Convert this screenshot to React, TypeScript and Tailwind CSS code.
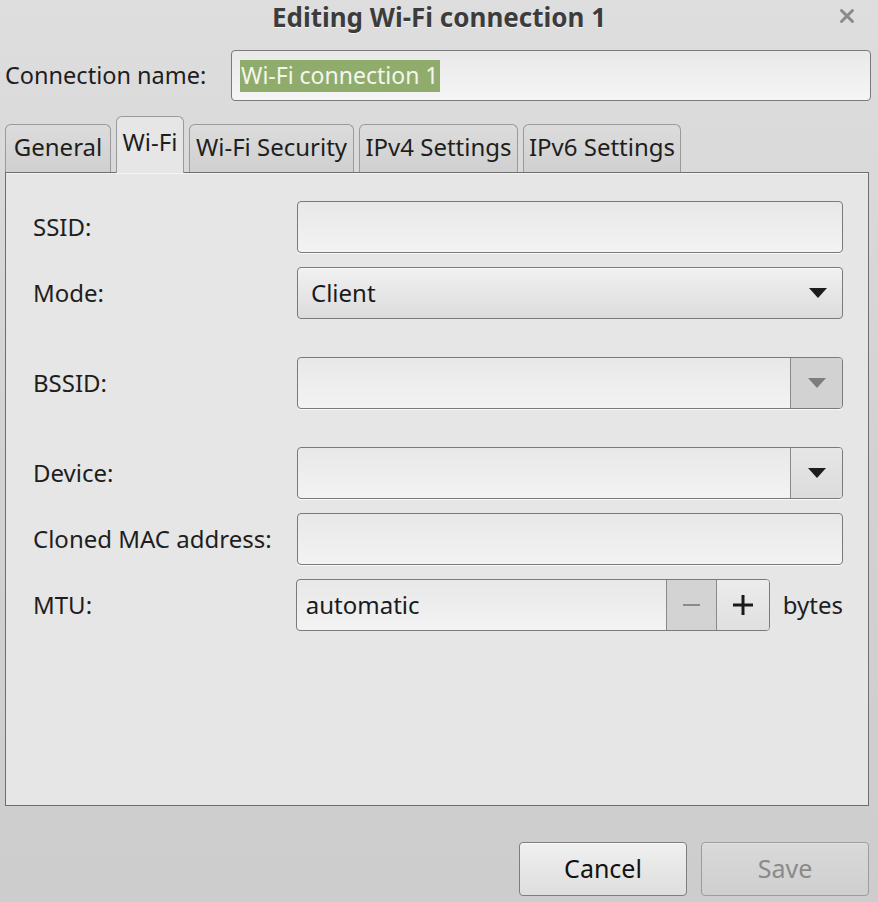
import { X } from "lucide-react"

const font = { fontFamily: '"Noto Sans", "Open Sans", sans-serif' }

function Arrow({ muted }: { muted?: boolean }) {
  return (
    <svg width="20" height="12" viewBox="0 0 20 12">
      <path d="M1 1 H19 L10 11 Z" fill={muted ? "#7d7d7d" : "#1c1c1c"} />
    </svg>
  )
}

function Entry({ children }: { children?: React.ReactNode }) {
  return (
    <div className="flex h-[52px] flex-1 items-center rounded-[4px] border border-[#7a7a7a] bg-gradient-to-b from-[#e8e8e8] to-[#f3f3f3] px-[13px] text-[24px] text-[#1a1a1a] shadow-[0_1px_0_#fafafa]">
      {children}
    </div>
  )
}

function Combo({ muted }: { muted?: boolean }) {
  return (
    <div className="flex h-[52px] flex-1 overflow-hidden rounded-[4px] border border-[#7a7a7a] bg-gradient-to-b from-[#e8e8e8] to-[#f3f3f3] shadow-[0_1px_0_#fafafa]">
      <div className="flex-1" />
      <div className={`flex w-[52px] items-center justify-center border-l border-[#8a8a8a] ${muted ? "bg-[#d2d2d2]" : "bg-gradient-to-b from-[#e6e6e6] to-[#dcdcdc]"}`}>
        <Arrow muted={muted} />
      </div>
    </div>
  )
}

function Row({ label, children, className = "" }: { label: string; children: React.ReactNode; className?: string }) {
  return (
    <div className={`flex items-center ${className}`}>
      <div className="w-[264px] text-[24px] text-[#1e1e1e]">{label}</div>
      <div className="flex flex-1 items-center">{children}</div>
    </div>
  )
}

const tabs = [
  { name: "General", w: 106 },
  { name: "Wi-Fi", w: 68, active: true },
  { name: "Wi-Fi Security", w: 165 },
  { name: "IPv4 Settings", w: 159 },
  { name: "IPv6 Settings", w: 158 },
]

export default function App() {
  return (
    <div style={font} className="flex h-[902px] w-[878px] flex-col overflow-hidden bg-gradient-to-b from-[#dedede] via-[#d2d2d2] to-[#cdcdcd]">
      {/* header */}
      <div className="relative flex h-[34px] items-center justify-center">
        <span className="text-[26px] font-bold text-[#3c3c3c] [text-shadow:0_1px_0_#f4f4f4]">
          Editing Wi-Fi connection 1
        </span>
        <X className="absolute right-[20px] top-[5px] h-[22px] w-[22px] text-[#8a8a8a]" strokeWidth={3.2} />
      </div>

      <div className="mt-[16px] flex items-center pl-[5px] pr-[7px]">
        <div className="w-[226px] whitespace-nowrap text-[23.5px] text-[#1e1e1e]">Connection name:</div>
        <div className="flex h-[51px] flex-1 items-center rounded-[4px] border border-[#7a7a7a] bg-gradient-to-b from-[#e9e9e9] to-[#f5f5f5] pl-[8px]">
          <div className="flex h-[32px] items-center whitespace-nowrap bg-[#90ac6c] pl-[1px] pr-[2px] text-[23px] text-[#f4f6ee]">
            Wi-Fi connection 1
          </div>
        </div>
      </div>

      {/* tabs */}
      <div className="mt-[15px] flex items-end gap-[5px] pl-[5px]">
        {tabs.map((t) =>
          t.active ? (
            <div
              key={t.name}
              style={{ width: t.w }}
              className="relative z-10 -mb-px flex h-[57px] items-start justify-center whitespace-nowrap rounded-t-[6px] border border-b-0 border-[#9a9a9a] bg-[#e6e6e6] pt-[7px] text-[24px] text-[#1e1e1e]"
            >
              {t.name}
            </div>
          ) : (
            <div
              key={t.name}
              style={{ width: t.w }}
              className="flex h-[48px] items-center justify-center whitespace-nowrap rounded-t-[6px] border border-b-0 border-[#9a9a9a] bg-gradient-to-b from-[#dcdcdc] to-[#d0d0d0] pb-[4px] text-[24px] text-[#1e1e1e]"
            >
              {t.name}
            </div>
          )
        )}
      </div>

      {/* panel */}
      <div className="mx-[5px] mr-[9px] flex h-[634px] flex-col border border-[#6e6e6e] bg-[#e6e6e6] pl-[27px] pr-[25px] pt-[28px] shadow-[inset_0_1px_0_#f4f4f4]">
        <Row label="SSID:">
          <Entry />
        </Row>
        <Row label="Mode:" className="mt-[14px]">
          <div className="flex h-[52px] flex-1 items-center rounded-[4px] border border-[#7a7a7a] bg-gradient-to-b from-[#f1f1f1] to-[#dcdcdc] pl-[13px] pr-[14px] text-[24px] text-[#1a1a1a] shadow-[inset_0_1px_0_#fafafa]">
            <span className="flex-1">Client</span>
            <Arrow />
          </div>
        </Row>
        <Row label="BSSID:" className="mt-[38px]">
          <Combo muted />
        </Row>
        <Row label="Device:" className="mt-[38px]">
          <Combo />
        </Row>
        <Row label="Cloned MAC address:" className="mt-[14px]">
          <Entry />
        </Row>
        <Row label="MTU:" className="mt-[14px]">
          <div className="flex h-[52px] w-[474px] overflow-hidden rounded-[4px] border border-[#7a7a7a] bg-gradient-to-b from-[#e8e8e8] to-[#f3f3f3]">
            <div className="flex flex-1 items-center pl-[9px] text-[24px] text-[#1a1a1a]">automatic</div>
            <div className="flex w-[50px] items-center justify-center border-l border-[#8a8a8a] bg-[#d3d3d3]">
              <div className="h-[2px] w-[17px] bg-[#8a8a8a]" />
            </div>
            <div className="flex w-[53px] items-center justify-center border-l border-[#8a8a8a] bg-gradient-to-b from-[#ececec] to-[#e0e0e0]">
              <svg width="22" height="22" viewBox="0 0 22 22">
                <path d="M11 1 V21 M1 11 H21" stroke="#1a1a1a" strokeWidth="3" />
              </svg>
            </div>
          </div>
          <span className="ml-[13px] text-[24px] text-[#1e1e1e]">bytes</span>
        </Row>
      </div>

      {/* buttons */}
      <div className="mt-[36px] flex justify-end gap-[14px] pr-[9px]">
        <button className="flex h-[54px] w-[168px] items-center justify-center rounded-[4px] border border-[#7e7e7e] bg-gradient-to-b from-[#f0f0f0] to-[#dedede] text-[25px] text-[#111] shadow-[inset_0_1px_0_#fafafa]">
          Cancel
        </button>
        <button className="flex h-[54px] w-[168px] items-center justify-center rounded-[4px] border border-[#9c9c9c] bg-gradient-to-b from-[#d9d9d9] to-[#cfcfcf] text-[25px] text-[#8a8a8a] shadow-[inset_0_1px_0_#e4e4e4]">
          Save
        </button>
      </div>
    </div>
  )
}
